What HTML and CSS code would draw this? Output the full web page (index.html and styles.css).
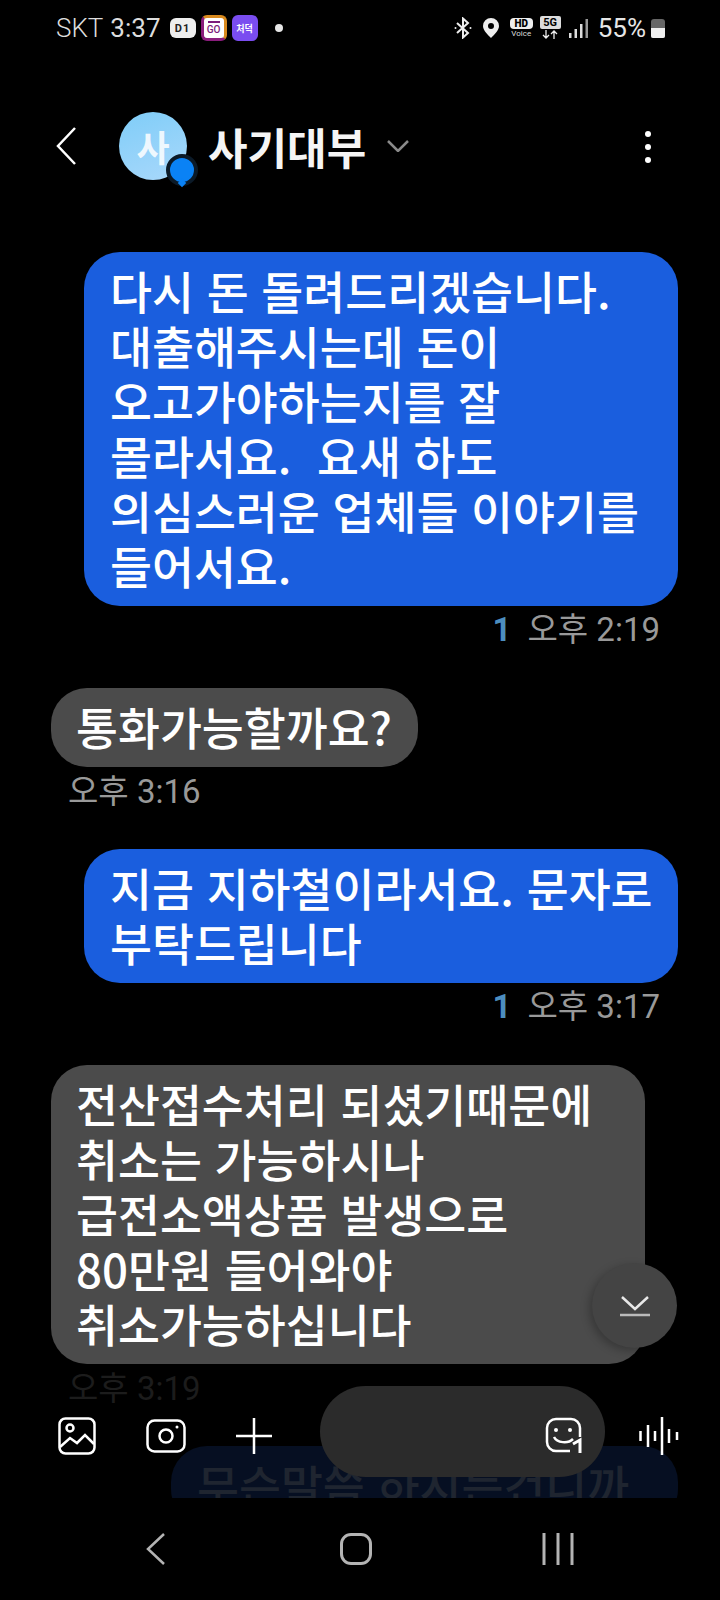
FILE: index.html
```html
<!DOCTYPE html>
<html lang="ko">
<head>
    <meta charset="UTF-8">
    <meta name="viewport" content="width=device-width, initial-scale=1.0">
    <title>사기대부</title>
    <link rel="stylesheet" href="styles.css">
</head>
<body>
<div class="phone">
    <!-- Status bar -->
    <div class="status-bar">
        <div class="status-left">
            <span class="carrier">SKT</span>
            <span class="clock">3:37</span>
            <span class="badge badge-d1">D1</span>
            <span class="badge badge-go"><span class="go-bar"></span>GO</span>
            <span class="badge badge-cheok">처덕</span>
            <span class="status-dot"></span>
        </div>
        <div class="status-right">
            <svg class="ico-bt" width="18" height="22" viewBox="0 0 18 22" fill="none" stroke="#eee" stroke-width="2"><path d="M3 6l11 10-5 4.500V1.500l5 4.500L3 16"/><circle cx="1.500" cy="11" r="1" fill="#eee" stroke="none"/><circle cx="16.500" cy="11" r="1" fill="#eee" stroke="none"/></svg>
            <svg class="ico-pin" width="16" height="20" viewBox="0 0 16 20"><path fill="#eee" fill-rule="evenodd" d="M8 0a8 8 0 0 1 8 8c0 4.500-5 9-8 12-3-3-8-7.500-8-12a8 8 0 0 1 8-8zm0 5a3 3 0 1 0 0 6 3 3 0 0 0 0-6z"/></svg>
            <span class="hd-voice"><span class="hd">HD</span><span class="voice">Voice</span></span>
            <span class="net"><span class="five-g">5G</span><svg width="16" height="9" viewBox="0 0 16 9" fill="none" stroke="#eee" stroke-width="1.300"><path d="M4 0v8M1 5l3 3 3-3M12 9V1M9 4l3-3 3 3"/></svg></span>
            <svg class="ico-signal" width="19" height="19" viewBox="0 0 19 19" fill="#ddd"><rect x="0" y="14" width="2.500" height="5"/><rect x="5.500" y="10" width="2.500" height="9"/><rect x="11" y="5" width="2.500" height="14"/><rect x="16.500" y="0" width="2.500" height="19" fill="#999"/></svg>
            <span class="battery-text">55%</span>
            <span class="battery"><span class="battery-fill"></span></span>
        </div>
    </div>

    <!-- Conversation header -->
    <header class="chat-head">
        <svg class="ico-back" width="20" height="38" viewBox="0 0 20 38" fill="none" stroke="#fff" stroke-width="2.500"><path d="M19 1L2 19l17 18"/></svg>
        <div class="avatar">
            <span>사</span>
            <span class="avatar-dot"></span>
        </div>
        <h1 class="chat-name">사기대부</h1>
        <svg class="ico-caret" width="22" height="12" viewBox="0 0 22 12" fill="none" stroke="#8a8a8a" stroke-width="2.500"><path d="M1 1l10 10L21 1"/></svg>
        <div class="more"><i></i><i></i><i></i></div>
    </header>

    <!-- Messages -->
    <div class="messages">
        <div class="msg sent">
            <div class="bubble wide">다시 돈 돌려드리겠습니다.<br>대출해주시는데 돈이<br>오고가야하는지를 잘<br>몰라서요.&nbsp; 요새 하도<br>의심스러운 업체들 이야기를<br>들어서요.</div>
            <div class="meta"><span class="unread">1</span><span>오후 2:19</span></div>
        </div>
        <div class="msg received">
            <div class="bubble">통화가능할까요?</div>
            <div class="meta"><span>오후 3:16</span></div>
        </div>
        <div class="msg sent">
            <div class="bubble wide">지금 지하철이라서요. 문자로<br>부탁드립니다</div>
            <div class="meta"><span class="unread">1</span><span>오후 3:17</span></div>
        </div>
        <div class="msg received">
            <div class="bubble wide">전산접수처리 되셨기때문에<br>취소는 가능하시나<br>급전소액상품 발생으로<br>80만원 들어와야<br>취소가능하십니다</div>
            <div class="meta faded"><span>오후 3:19</span></div>
        </div>
        <div class="msg sent ghost">
            <div class="bubble">무슨말씀 하시는건니까</div>
        </div>

        <button class="scroll-down">
            <svg width="30" height="22" viewBox="0 0 30 22" fill="none" stroke="#e8e8e8" stroke-width="2.500"><path d="M2 2l13 12L28 2"/><path d="M0 20h30" stroke="#bbb"/></svg>
        </button>

        <!-- Composer floats over the list -->
        <div class="composer">
            <svg class="ico-tool" width="38" height="38" viewBox="0 0 38 38" fill="none" stroke="#fff" stroke-width="2.500"><rect x="1.500" y="1.500" width="35" height="35" rx="6"/><circle cx="12" cy="11" r="3.500"/><path d="M2 30l10-9 7 5 8-8 9 9"/></svg>
            <svg class="ico-tool" width="40" height="34" viewBox="0 0 40 34" fill="none" stroke="#fff" stroke-width="2.500"><rect x="1.500" y="1.500" width="37" height="31" rx="7"/><circle cx="20" cy="17" r="6.500"/><circle cx="31" cy="8" r="1.500" fill="#fff" stroke="none"/></svg>
            <svg class="ico-tool" width="36" height="36" viewBox="0 0 36 36" fill="none" stroke="#fff" stroke-width="2.500"><path d="M18 0v36M0 18h36"/></svg>
            <div class="input-pill">
                <svg width="38" height="36" viewBox="0 0 38 36" fill="none" stroke="#fff" stroke-width="2.500"><path d="M35 20V11a9 9 0 0 0-9-9H11a9 9 0 0 0-9 9v14a9 9 0 0 0 9 9h14"/><circle cx="11" cy="13" r="2" fill="#fff" stroke="none"/><circle cx="25" cy="13" r="2" fill="#fff" stroke="none"/><path d="M9 20c3 6 14 7 19 2"/><path d="M28 27l7-4v13" stroke-width="3"/></svg>
            </div>
            <svg class="ico-voice" width="40" height="38" viewBox="0 0 40 38" fill="none" stroke="#fff" stroke-width="2.500"><path d="M1.500 14v10M9 8v22M16 14v10M23 0v38M30 12v14M38 15v8"/></svg>
        </div>
    </div>

    <!-- Navigation bar -->
    <nav class="nav-bar">
        <svg width="20" height="34" viewBox="0 0 20 34" fill="none" stroke="#b4b4b4" stroke-width="2.500"><path d="M18 2L2 17l16 15"/></svg>
        <span class="nav-home"></span>
        <svg width="32" height="32" viewBox="0 0 32 32" fill="none" stroke="#b4b4b4" stroke-width="3"><path d="M2 0v32M16 0v32M30 0v32"/></svg>
    </nav>
</div>
</body>
</html>
```

FILE: styles.css
```css
* {
    box-sizing: border-box;
}
body {
    margin: 0;
    background-color: #000;
    color: #fff;
    font-family: "Noto Sans CJK KR", "Noto Sans", Roboto, sans-serif;
}
.phone {
    width: 720px;
    height: 1600px;
    display: flex;
    flex-direction: column;
    overflow: hidden;
    background-color: #000;
}

/* status bar */
.status-bar {
    height: 56px;
    padding: 0 55px 0 56px;
    display: flex;
    justify-content: space-between;
    align-items: center;
    color: #ddd;
    flex-shrink: 0;
}
.status-left, .status-right {
    display: flex;
    align-items: center;
}
.carrier, .clock, .battery-text {
    font-family: Roboto, sans-serif;
    font-size: 26px;
}
.carrier {
    margin-right: 7px;
    font-weight: 300;
}
.clock {
    margin-right: 9px;
}
.badge {
    width: 26px;
    height: 26px;
    border-radius: 6px;
    margin-right: 5px;
    display: flex;
    align-items: center;
    justify-content: center;
    font-family: Roboto, sans-serif;
    font-weight: 700;
}
.badge-d1 {
    height: 20px;
    background-color: #eee;
    color: #222;
    font-size: 11px;
    letter-spacing: 1px;
}
.badge-go {
    background-color: #fff;
    border: 3px solid #8a1d7c;
    border-right-color: #d98a1e;
    border-top-color: #d98a1e;
    color: #7b1c7b;
    font-size: 10px;
    font-weight: 500;
    flex-direction: column;
}
.go-bar {
    width: 12px;
    height: 2px;
    background-color: #7b1c7b;
    margin-bottom: 1px;
}
.badge-cheok {
    background-color: #7a4df0;
    color: #fff;
    font-family: "Noto Sans CJK KR", sans-serif;
    font-size: 9px;
}
.status-dot {
    width: 8px;
    height: 8px;
    border-radius: 50%;
    background-color: #e6e6e6;
    margin-left: 12px;
}
.ico-bt {
    margin-right: 11px;
}
.ico-pin {
    margin-right: 11px;
}
.hd-voice {
    display: flex;
    flex-direction: column;
    align-items: center;
    width: 23px;
    margin-right: 7px;
    font-family: Roboto, sans-serif;
}
.hd {
    width: 23px;
    height: 11px;
    line-height: 11px;
    border-radius: 4px;
    background-color: #eee;
    color: #000;
    font-size: 10px;
    font-weight: 900;
    text-align: center;
}
.voice {
    font-size: 8px;
    line-height: 10px;
    color: #ddd;
}
.net {
    display: flex;
    flex-direction: column;
    align-items: center;
    width: 21px;
    margin-right: 8px;
    margin-top: -2px;
}
.five-g {
    width: 21px;
    height: 13px;
    line-height: 13px;
    background-color: #ddd;
    border-radius: 2px;
    color: #000;
    font-family: Roboto, sans-serif;
    font-size: 11px;
    font-weight: 700;
    text-align: center;
    margin-bottom: 1px;
}
.ico-signal {
    margin-right: 10px;
}
.battery-text {
    font-weight: 400;
    color: #e6e6e6;
    margin-right: 5px;
}
.battery {
    width: 14px;
    height: 19px;
    border-radius: 3px 3px 2px 2px;
    background-color: #666;
    display: flex;
    align-items: flex-end;
}
.battery-fill {
    width: 100%;
    height: 10px;
    background-color: #eee;
    border-radius: 0 0 2px 2px;
}

/* conversation header */
.chat-head {
    height: 180px;
    padding: 0 56px 0 56px;
    display: flex;
    align-items: center;
    flex-shrink: 0;
}
.ico-back {
    margin-right: 43px;
}
.avatar {
    position: relative;
    width: 68px;
    height: 68px;
    border-radius: 50%;
    background: linear-gradient(160deg, #7fcdf8, #a9d8fb);
    display: flex;
    align-items: center;
    justify-content: center;
    font-size: 36px;
    font-weight: 700;
    color: rgba(255, 255, 255, 0.85);
    margin-right: 21px;
}
.avatar-dot {
    position: absolute;
    right: -11px;
    bottom: -6px;
    width: 32px;
    height: 32px;
    border-radius: 50%;
    background-color: #0a82f5;
    border: 4px solid #0b1a28;
}
.avatar-dot::after {
    content: "";
    position: absolute;
    left: 9px;
    bottom: -4px;
    width: 6px;
    height: 6px;
    background-color: #0a82f5;
    transform: rotate(45deg);
}
.chat-name {
    margin: 0 21px 0 0;
    font-size: 43px;
    font-weight: 700;
    line-height: 1;
    color: #f5f5f5;
}
.more {
    margin-left: auto;
    margin-right: 13px;
    margin-top: 2px;
    display: flex;
    flex-direction: column;
    gap: 7px;
}
.more i {
    display: block;
    width: 6px;
    height: 6px;
    border-radius: 50%;
    background-color: #fff;
}

/* messages */
.messages {
    position: relative;
    flex: 1;
    padding-top: 16px;
    overflow: hidden;
}
.msg {
    display: flex;
    flex-direction: column;
}
.msg.sent {
    align-items: flex-end;
    padding-right: 42px;
}
.msg.received {
    align-items: flex-start;
    padding-left: 51px;
}
.bubble {
    padding: 11px 26px 13px;
    border-radius: 36px;
    font-size: 45.600px;
    font-weight: 500;
    line-height: 55px;
    white-space: nowrap;
    color: #fff;
}
.bubble.wide {
    width: 594px;
}
.sent .bubble {
    background-color: #1a5ede;
}
.received .bubble {
    padding-left: 25px;
    background-color: #4b4b4b;
}
.meta {
    display: flex;
    gap: 16px;
    font-family: Roboto, "Noto Sans CJK KR", sans-serif;
    font-size: 33px;
    line-height: 48px;
    color: #999;
}
.sent .meta {
    padding-right: 18px;
}
.received .meta {
    padding-left: 17px;
    padding-top: 2px;
    line-height: 46px;
}
.unread {
    color: #4d8ebf;
    font-weight: 700;
}
.msg + .msg {
    margin-top: 34px;
}
.meta.faded {
    color: #1c1c1c;
}
.ghost .bubble {
    width: 507px;
    background-color: #060f22;
    color: #1f2530;
}
.scroll-down {
    position: absolute;
    left: 592px;
    top: 1027px;
    width: 85px;
    height: 85px;
    border: none;
    padding: 0;
    border-radius: 50%;
    background-color: #444;
    box-shadow: -3px 3px 8px rgba(0, 0, 0, 0.25);
    display: flex;
    align-items: center;
    justify-content: center;
}
.composer {
    position: absolute;
    left: 0;
    top: 1150px;
    width: 720px;
    height: 91px;
    display: flex;
    align-items: center;
    padding-left: 58px;
}
.ico-tool {
    margin-top: 9px;
}
.ico-tool:nth-child(1) {
    margin-right: 50px;
}
.ico-tool:nth-child(2) {
    margin-right: 50px;
}
.ico-tool:nth-child(3) {
    margin-right: 48px;
}
.input-pill {
    width: 285px;
    height: 91px;
    border-radius: 46px;
    background-color: #2b2b2b;
    display: flex;
    align-items: center;
    justify-content: flex-end;
    padding-right: 22px;
    padding-top: 6px;
    margin-right: 34px;
}
.ico-voice {
    margin-top: 9px;
}

/* navigation bar */
.nav-bar {
    height: 102px;
    flex-shrink: 0;
    display: flex;
    align-items: center;
    justify-content: space-between;
    padding: 0 146px;
    background-color: #000;
}
.nav-home {
    width: 32px;
    height: 32px;
    margin-left: 4px;
    border: 3px solid #b4b4b4;
    border-radius: 11px;
}
```
